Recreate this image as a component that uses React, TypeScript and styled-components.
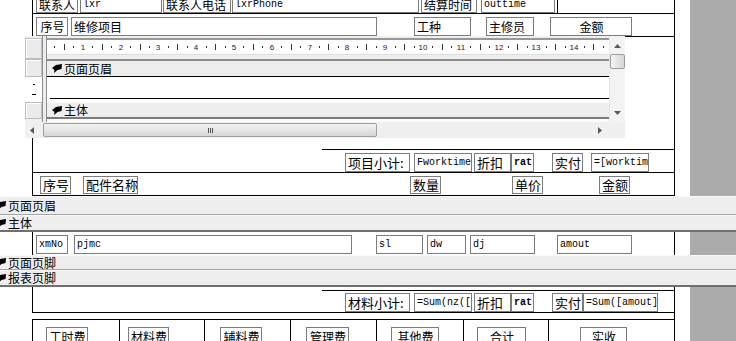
import styled, { createGlobalStyle } from "styled-components";

const CJK = `"Noto Sans CJK SC", "Noto Sans", sans-serif`;
const MONO = `"Liberation Mono", "DejaVu Sans Mono", monospace`;

type Field = {
  text: string;
  w: number;
  ml: number;
  center?: boolean;
  mono?: boolean;
  bold?: boolean;
};

const contactRow: Field[] = [
  { text: "联系人", w: 42, ml: 3 },
  { text: "lxr", w: 82, ml: 2, mono: true },
  { text: "联系人电话", w: 68, ml: 1 },
  { text: "lxrPhone", w: 187, ml: 1, mono: true },
  { text: "结算时间", w: 56, ml: 2 },
  { text: "outtime", w: 74, ml: 4, mono: true },
];

const itemHeadRow: Field[] = [
  { text: "序号", w: 32, ml: 3, center: true },
  { text: "维修项目", w: 306, ml: 3 },
  { text: "工种", w: 57, ml: 37 },
  { text: "主修员", w: 48, ml: 15 },
  { text: "金额", w: 82, ml: 16, center: true },
];

const workSubtotal: Field[] = [
  { text: "项目小计:", w: 65, ml: 312 },
  { text: "Fworktime", w: 58, ml: 4, mono: true },
  { text: "折扣", w: 37, ml: 2 },
  { text: "rat", w: 23, ml: 0, mono: true, bold: true },
  { text: "实付", w: 31, ml: 18 },
  { text: "=[worktim", w: 58, ml: 8, mono: true },
];

const partsHeadRow: Field[] = [
  { text: "序号", w: 31, ml: 7 },
  { text: "配件名称", w: 55, ml: 12 },
  { text: "数量", w: 31, ml: 272 },
  { text: "单价", w: 31, ml: 71 },
  { text: "金额", w: 31, ml: 56 },
];

const detailRow: Field[] = [
  { text: "xmNo", w: 32, ml: 3, mono: true },
  { text: "pjmc", w: 278, ml: 6, mono: true },
  { text: "sl", w: 47, ml: 24, mono: true },
  { text: "dw", w: 39, ml: 4, mono: true },
  { text: "dj", w: 65, ml: 4, mono: true },
  { text: "amout", w: 75, ml: 22, mono: true },
];

const partsSubtotal: Field[] = [
  { text: "材料小计:", w: 65, ml: 312 },
  { text: "=Sum(nz([", w: 58, ml: 4, mono: true },
  { text: "折扣", w: 37, ml: 2 },
  { text: "rat", w: 23, ml: 0, mono: true, bold: true },
  { text: "实付", w: 31, ml: 18 },
  { text: "=Sum([amout]", w: 75, ml: 0, mono: true },
];

const totals: Field[] = [
  { text: "工时费", w: 42, ml: 13, center: true },
  { text: "材料费", w: 41, ml: 8, center: true },
  { text: "辅料费", w: 42, ml: 15, center: true },
  { text: "管理费", w: 43, ml: 15, center: true },
  { text: "其他费", w: 48, ml: 14, center: true },
  { text: "合计", w: 49, ml: 13, center: true },
  { text: "实收", w: 47, ml: 31, center: true },
];

const RULER_UNIT = 37.8;

const GlobalStyle = createGlobalStyle`
  html, body {
    margin: 0;
    padding: 0;
    background: #fff;
  }
  body {
    font-family: ${CJK};
    color: #000;
  }
`;

const Screen = styled.div`
  position: relative;
  width: 736px;
  height: 341px;
  overflow: hidden;
  background: linear-gradient(to right, #fff 690px, #ababab 690px);
`;

const Frame = styled.div<{ $open?: boolean }>`
  box-sizing: border-box;
  width: 643px;
  margin-left: 32px;
  border-left: 1px solid ${(p) => (p.$open ? "transparent" : "#000")};
  border-right: 1px solid #000;
`;

const Row = styled.div<{ $h: number; $line?: boolean }>`
  display: flex;
  align-items: flex-start;
  height: ${(p) => p.$h}px;
  border-bottom: ${(p) => (p.$line ? "1px solid #000" : "none")};
`;

const Blank = styled.div<{ $h: number }>`
  height: ${(p) => p.$h}px;
`;

const ShortRule = styled.div`
  height: 1px;
  margin-left: 289px;
  background: #000;
`;

const Divider = styled.div<{ $ml: number }>`
  flex: none;
  width: 1px;
  height: 100%;
  margin-left: ${(p) => p.$ml}px;
  background: #000;
`;

const Ctl = styled.div<{
  $w: number;
  $ml: number;
  $mt: number;
  $h: number;
  $fs: number;
  $center?: boolean;
  $mono?: boolean;
  $bold?: boolean;
}>`
  flex: none;
  box-sizing: border-box;
  width: ${(p) => p.$w}px;
  height: ${(p) => p.$h}px;
  margin-left: ${(p) => p.$ml}px;
  margin-top: ${(p) => p.$mt}px;
  padding: 0 1px 0 2px;
  border: 1px solid #7c7c7c;
  background: #fff;
  font-family: ${(p) => (p.$mono ? MONO : CJK)};
  font-size: ${(p) => (p.$mono ? 10 : p.$fs)}px;
  font-weight: ${(p) => (p.$bold ? 700 : 400)};
  line-height: ${(p) => p.$h - 2}px;
  text-align: ${(p) => (p.$center ? "center" : "left")};
  white-space: nowrap;
  overflow: hidden;
`;

const Band = styled.div<{ $h: number; $heavy?: boolean }>`
  box-sizing: border-box;
  display: flex;
  align-items: center;
  width: 736px;
  height: ${(p) => p.$h}px;
  padding-left: 8px;
  background: #eeeeee;
  border-top: 1px solid #fafafa;
  border-bottom: ${(p) => (p.$heavy ? "2px solid #6f6f6f" : "1px solid #a4a4a4")};
  font-size: 12px;
  line-height: 12px;
  white-space: nowrap;
`;

const Glyph = styled.svg<{ $ml: number }>`
  flex: none;
  margin-left: ${(p) => p.$ml}px;
  margin-right: 2px;
`;

const Totals = styled.div`
  box-sizing: border-box;
  display: grid;
  grid-template-columns: 87px 85px 86px 86px 87px 85px 126px;
  width: 643px;
  margin-left: 32px;
  border-top: 1px solid #000;
  border-left: 1px solid #000;
`;

const TotalCell = styled.div`
  box-sizing: border-box;
  display: flex;
  align-items: flex-start;
  height: 30px;
  padding-top: 7px;
  border-right: 1px solid #000;
`;

/* floating design-view window */
const Designer = styled.div`
  position: absolute;
  left: 25px;
  top: 36px;
  width: 600px;
  height: 102px;
  display: grid;
  grid-template-columns: 17px 5px 562px 16px;
  grid-template-rows: 23px 18px 25px 17px 3px 16px;
  background: #f0f0f0;
`;

const Selector = styled.div<{ $row: number; $mt?: number }>`
  box-sizing: border-box;
  grid-column: 1;
  grid-row: ${(p) => p.$row};
  margin-top: ${(p) => p.$mt ?? 0}px;
  background: #ebebeb;
  border: 1px solid #bdbdbd;
  box-shadow: inset 1px 1px 0 #fff;
`;

const VRuler = styled.div`
  grid-column: 1;
  grid-row: 3;
  display: flex;
  flex-direction: column;
  background: #fff;
`;

const VTick = styled.div<{ $w: number; $mt: number; $ml: number }>`
  width: ${(p) => p.$w}px;
  height: 1px;
  margin-top: ${(p) => p.$mt}px;
  margin-left: ${(p) => p.$ml}px;
  background: #000;
`;

const Splitter = styled.div`
  box-sizing: border-box;
  grid-column: 2;
  grid-row: 1 / 6;
  border-left: 1px solid #8e8e8e;
  border-right: 1px solid #8e8e8e;
  background: #ededed;
`;

const RulerStrip = styled.div`
  box-sizing: border-box;
  grid-column: 3;
  grid-row: 1;
  height: 17px;
  margin-top: 2px;
  border-top: 2px solid #979797;
  border-bottom: 1px solid #dcdcdc;
  background: #fff;
  overflow: hidden;
`;

const RulerSvg = styled.svg`
  display: block;
  font-family: "Liberation Sans", Arial, sans-serif;
  font-size: 8px;
`;

const SectionBar = styled.div<{ $row: number; $first?: boolean }>`
  box-sizing: border-box;
  grid-column: 3;
  grid-row: ${(p) => p.$row};
  display: flex;
  align-items: center;
  padding-left: 5px;
  background: #eeeeee;
  border-top: ${(p) => (p.$first ? "2px solid #8a8a8a" : "1px solid #fbfbfb")};
  border-bottom: ${(p) => (p.$first ? "1px solid #000" : "2px solid #7b7b7b")};
  font-size: 12px;
  line-height: 12px;
  white-space: nowrap;
`;

const SectionArea = styled.div`
  grid-column: 3;
  grid-row: 3;
  background: #fff;
`;

const LineCtl = styled.div`
  height: 1px;
  margin: 21px 0 0 3px;
  background: #000;
`;

const Filler = styled.div`
  grid-column: 3;
  grid-row: 5;
  background: #fbfbfb;
`;

const VScroll = styled.div`
  grid-column: 4;
  grid-row: 1 / 6;
  display: flex;
  flex-direction: column;
  align-items: center;
  padding: 8px 0 7px;
  background: #f3f3f3;
  border-left: 1px solid #e6e6e6;
`;

const HScroll = styled.div`
  grid-column: 1 / 4;
  grid-row: 6;
  display: flex;
  align-items: center;
  padding: 0 7px 0 5px;
  background: #f0f0f0;
`;

const Corner = styled.div`
  grid-column: 4;
  grid-row: 6;
  background: #f0f0f0;
`;

const Thumb = styled.div<{ $vertical?: boolean }>`
  box-sizing: border-box;
  flex: none;
  display: flex;
  align-items: center;
  justify-content: center;
  gap: 1px;
  width: ${(p) => (p.$vertical ? "15px" : "334px")};
  height: ${(p) => (p.$vertical ? "15px" : "14px")};
  margin: ${(p) => (p.$vertical ? "6px 0 0 -1px" : "0 0 0 9px")};
  border: 1px solid #9c9c9c;
  border-radius: 2px;
  background: ${(p) =>
    p.$vertical
      ? "linear-gradient(to right, #f4f4f4, #d6d6d6)"
      : "linear-gradient(#f4f4f4, #d6d6d6)"};
`;

const Grip = styled.span`
  width: 1px;
  height: 5px;
  background: #555;
`;

const Stretch = styled.div`
  flex: 1;
`;

const Arrow = styled.svg`
  flex: none;
  display: block;
`;

function SectionGlyph({ ml }: { ml: number }) {
  return (
    <Glyph $ml={ml} width={10} height={9} viewBox="0 0 10 9">
      <path d="M0 4 L4 1 L10 0 L9.5 5 L5.5 6 L2 9 L2.5 6 Z" fill="#000" />
    </Glyph>
  );
}

function Fields({ list, mt, h, fs = 12 }: { list: Field[]; mt: number; h: number; fs?: number }) {
  return (
    <>
      {list.map((f, i) => (
        <Ctl
          key={i}
          $w={f.w}
          $ml={f.ml}
          $mt={mt}
          $h={h}
          $fs={fs}
          $center={f.center}
          $mono={f.mono}
          $bold={f.bold}
        >
          {f.text}
        </Ctl>
      ))}
    </>
  );
}

function Ruler() {
  const marks = [];
  for (let n = 0; n <= 14; n++) {
    const x = -2 + RULER_UNIT * n;
    if (n > 0) {
      marks.push(
        <text key={`n${n}`} x={Math.round(x)} y={10} textAnchor="middle" fill="#222">
          {n}
        </text>
      );
    }
    marks.push(<rect key={`a${n}`} x={Math.round(x + RULER_UNIT * 0.25)} y={6} width={1} height={2} fill="#333" />);
    marks.push(<rect key={`b${n}`} x={Math.round(x + RULER_UNIT * 0.5)} y={4} width={1} height={6} fill="#333" />);
    marks.push(<rect key={`c${n}`} x={Math.round(x + RULER_UNIT * 0.75)} y={6} width={1} height={2} fill="#333" />);
  }
  return (
    <RulerSvg width={562} height={14}>
      {marks}
    </RulerSvg>
  );
}

export default function App() {
  return (
    <>
      <GlobalStyle />
      <Screen>
        <Frame>
          <Row $h={13} $line>
            <Fields list={contactRow} mt={-4} h={17} />
            <Divider $ml={2} />
          </Row>
          <Row $h={22} $line>
            <Fields list={itemHeadRow} mt={3} h={19} />
          </Row>
          <Blank $h={112} />
          <ShortRule />
          <Row $h={22} $line>
            <Fields list={workSubtotal} mt={3} h={19} fs={13} />
          </Row>
          <Row $h={22} $line>
            <Fields list={partsHeadRow} mt={3} h={18} fs={13} />
          </Row>
        </Frame>

        <Band $h={19}>
          <SectionGlyph ml={-12} />
          页面页眉
        </Band>
        <Band $h={17} $heavy>
          <SectionGlyph ml={-12} />
          主体
        </Band>

        <Frame>
          <Row $h={23}>
            <Fields list={detailRow} mt={3} h={19} />
          </Row>
        </Frame>

        <Band $h={15}>
          <SectionGlyph ml={-12} />
          页面页脚
        </Band>
        <Band $h={17} $heavy>
          <SectionGlyph ml={-12} />
          报表页脚
        </Band>

        <Frame>
          <Blank $h={3} />
          <ShortRule />
          <Row $h={21} $line>
            <Fields list={partsSubtotal} mt={2} h={19} fs={13} />
          </Row>
        </Frame>
        <Frame $open>
          <Blank $h={6} />
        </Frame>
        <Totals>
          {totals.map((f, i) => (
            <TotalCell key={i}>
              <Fields list={[f]} mt={0} h={19} />
            </TotalCell>
          ))}
        </Totals>

        <Designer>
          <Selector $row={1} $mt={2} />
          <Selector $row={2} />
          <VRuler>
            <VTick $w={2} $mt={7} $ml={8} />
            <VTick $w={4} $mt={9} $ml={7} />
          </VRuler>
          <Selector $row={4} />
          <Splitter />
          <RulerStrip>
            <Ruler />
          </RulerStrip>
          <SectionBar $row={2} $first>
            <SectionGlyph ml={0} />
            页面页眉
          </SectionBar>
          <SectionArea>
            <LineCtl />
          </SectionArea>
          <SectionBar $row={4}>
            <SectionGlyph ml={0} />
            主体
          </SectionBar>
          <Filler />
          <VScroll>
            <Arrow width={7} height={4} viewBox="0 0 7 4">
              <path d="M0 4 L3.5 0 L7 4 Z" fill="#5a5a5a" />
            </Arrow>
            <Thumb $vertical />
            <Stretch />
            <Arrow width={7} height={4} viewBox="0 0 7 4">
              <path d="M0 0 L7 0 L3.5 4 Z" fill="#5a5a5a" />
            </Arrow>
          </VScroll>
          <HScroll>
            <Arrow width={4} height={7} viewBox="0 0 4 7">
              <path d="M4 0 L4 7 L0 3.5 Z" fill="#5a5a5a" />
            </Arrow>
            <Thumb>
              <Grip />
              <Grip />
              <Grip />
            </Thumb>
            <Stretch />
            <Arrow width={4} height={7} viewBox="0 0 4 7">
              <path d="M0 0 L4 3.5 L0 7 Z" fill="#5a5a5a" />
            </Arrow>
          </HScroll>
          <Corner />
        </Designer>
      </Screen>
    </>
  );
}
